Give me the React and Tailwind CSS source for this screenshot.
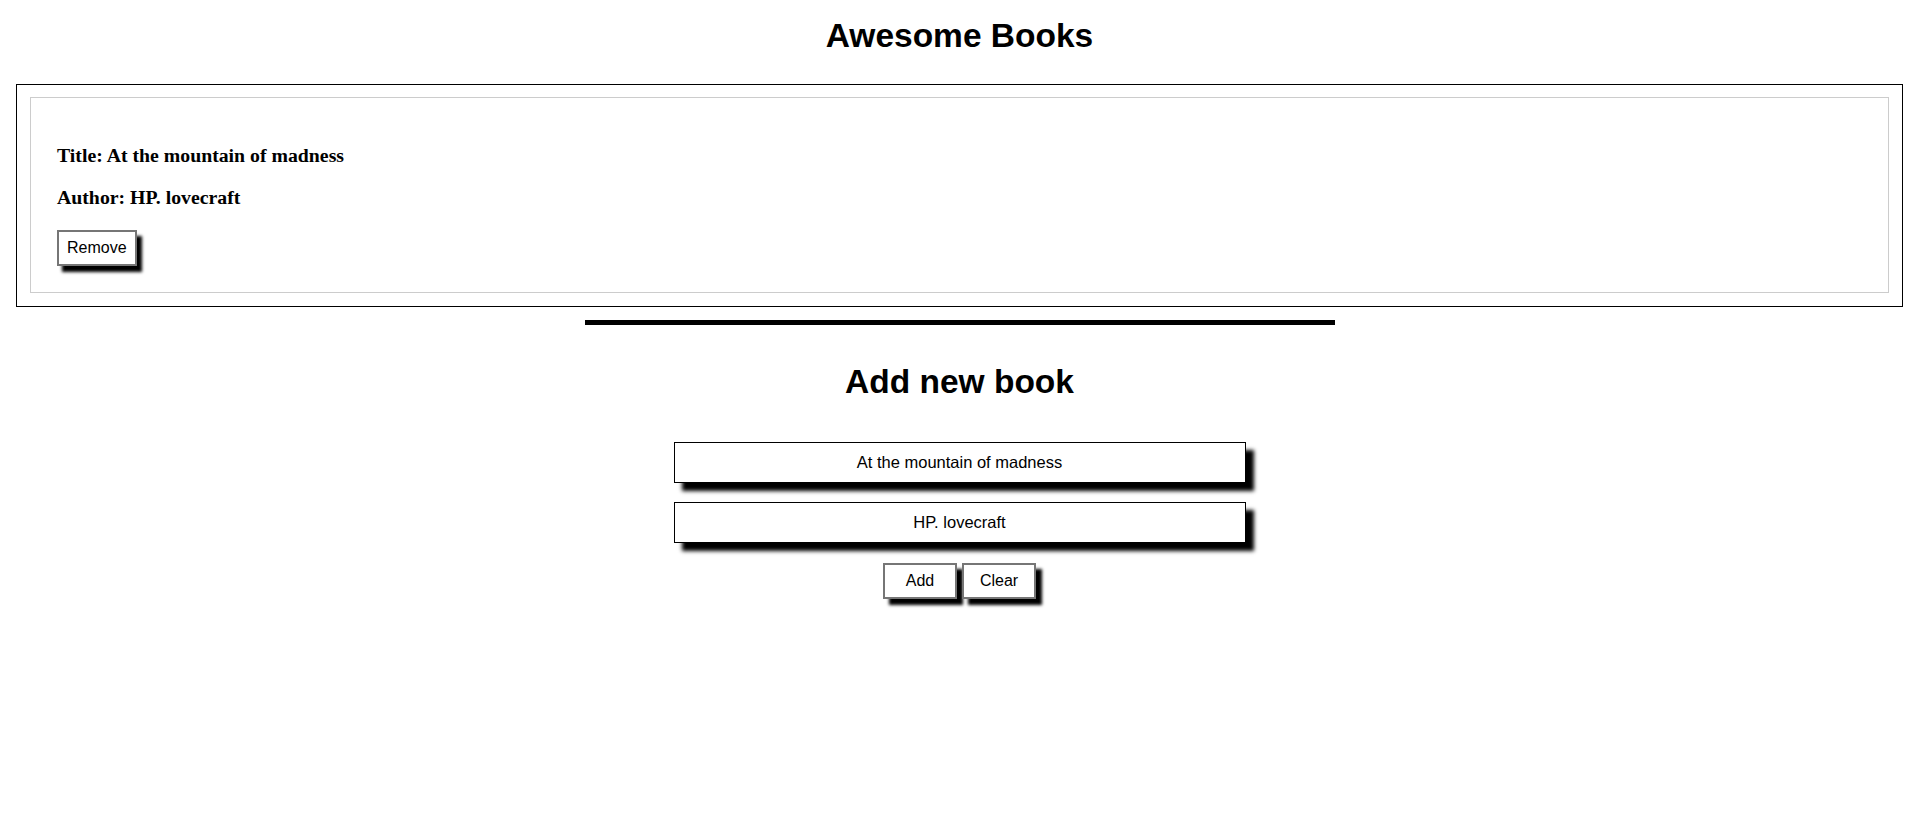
import { useState } from 'react';

const sans = "font-['Liberation_Sans',Arial,sans-serif]";
const serif = "font-['Liberation_Serif','Times_New_Roman',serif]";

export default function App() {
  const [books, setBooks] = useState([
    { id: 1, title: 'At the mountain of madness', author: 'HP. lovecraft' },
  ]);
  const [title, setTitle] = useState('At the mountain of madness');
  const [author, setAuthor] = useState('HP. lovecraft');

  function addBook() {
    if (!title || !author) return;
    setBooks(prev => [...prev, { id: Date.now(), title, author }]);
  }

  function removeBook(id) {
    setBooks(prev => prev.filter(b => b.id !== id));
  }

  return (
    <div className={`${sans} bg-white text-black min-h-[820px] pb-10`}>
      <h1 className="mt-[17px] text-center text-[33.5px] leading-[38px] font-bold">Awesome Books</h1>

      <div className="mx-4 mt-[29px] border border-black px-[13px] pt-[12px] pb-[13px]">
        {books.map(book => (
          <div key={book.id} className="border border-[#cccccc] pl-[26px] pt-[46px] pb-[26px]">
            <p className={`${serif} text-[19.8px] leading-[23px] font-bold`}>Title: {book.title}</p>
            <p className={`${serif} mt-[19px] text-[19.8px] leading-[23px] font-bold`}>Author: {book.author}</p>
            <button
              onClick={() => removeBook(book.id)}
              className="mt-[21px] h-[36px] px-[8px] text-[16px] bg-white border-2 border-[#767676] shadow-[5px_6px_3px_#000]">
              Remove
            </button>
          </div>
        ))}
      </div>

      <div className="mx-auto mt-[13px] w-[750px] h-[5px] bg-black" />

      <h2 className="mt-[38px] text-center text-[33.5px] leading-[38px] font-bold">Add new book</h2>

      <div className="flex flex-col items-center mt-[41px]">
        <input
          value={title}
          onChange={e => setTitle(e.target.value)}
          className="w-[572px] h-[41px] border border-black bg-white text-center text-[16.5px] outline-none shadow-[8px_8px_4px_#000]"
        />
        <input
          value={author}
          onChange={e => setAuthor(e.target.value)}
          className="mt-[19px] w-[572px] h-[41px] border border-black bg-white text-center text-[16.5px] outline-none shadow-[8px_8px_4px_#000]"
        />
        <div className="flex gap-[5px] mt-[20px]">
          <button
            onClick={addBook}
            className="w-[74px] h-[36px] text-[16px] bg-white border-2 border-[#767676] shadow-[6px_6px_3px_#000]">
            Add
          </button>
          <button
            onClick={() => { setTitle(''); setAuthor(''); }}
            className="w-[74px] h-[36px] text-[16px] bg-white border-2 border-[#767676] shadow-[6px_6px_3px_#000]">
            Clear
          </button>
        </div>
      </div>
    </div>
  );
}
